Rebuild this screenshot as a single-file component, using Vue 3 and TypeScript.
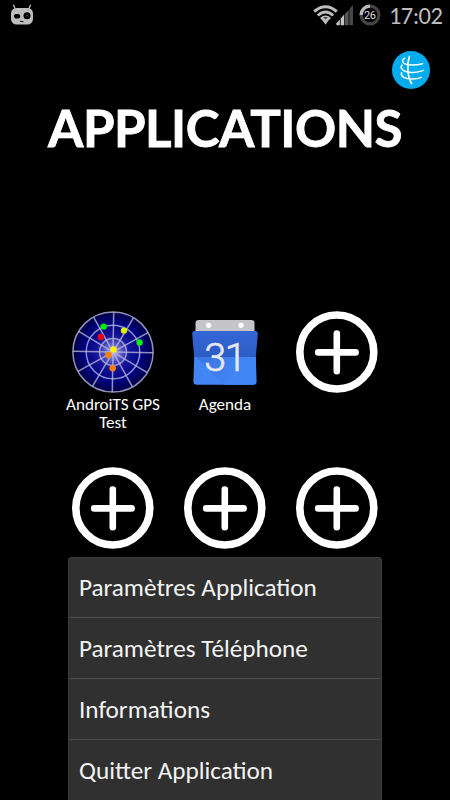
<script setup lang="ts">
interface AppSlot {
  id: number
  kind: 'gps' | 'agenda' | 'empty'
  label: string
}

const slots: AppSlot[] = [
  { id: 1, kind: 'gps', label: 'AndroiTS GPS Test' },
  { id: 2, kind: 'agenda', label: 'Agenda' },
  { id: 3, kind: 'empty', label: '' },
  { id: 4, kind: 'empty', label: '' },
  { id: 5, kind: 'empty', label: '' },
  { id: 6, kind: 'empty', label: '' },
]

const menuItems: string[] = [
  'Paramètres Application',
  'Paramètres Téléphone',
  'Informations',
  'Quitter Application',
]

// Radar spokes, one every 30 degrees
const spokes: number[] = [0, 30, 60, 90, 120, 150]
</script>

<template>
  <div class="screen">
    <header class="status">
      <svg class="robot" width="24" height="22" viewBox="0 0 24 22">
        <path d="M3.6 1.2 5.2 5M20.4 1.2 18.8 5" stroke="#bdbdbd" stroke-width="1.3" stroke-linecap="round" />
        <rect x="1" y="4" width="22" height="16.5" rx="5.5" fill="#bdbdbd" />
        <rect x="4" y="10" width="6.2" height="4.4" rx="2" fill="#000" />
        <circle cx="17" cy="11.8" r="3.5" fill="#000" />
        <circle cx="17" cy="11.8" r="0.7" fill="#777" />
        <path d="M10 17.2 13.4 17.8" stroke="#111" stroke-width="1.1" />
      </svg>
      <div class="indicators">
        <svg width="42" height="22" viewBox="0 0 42 22">
          <g fill="none" stroke="#bdbdbd" stroke-width="3">
            <path d="M1.2 7.5Q12.5 -2.1 23.8 7.5" />
            <path d="M4.8 11.5Q12.5 4.6 20.2 11.5" />
            <path d="M8 15Q12.5 11 17 15" />
          </g>
          <path d="M8.8 15.6Q12.5 13 16.2 15.6L12.5 20.8Z" fill="#bdbdbd" />
          <path d="M10.2 13.1l2.3 2.4 2.3-2.4z" fill="#444" />
          <path d="M23.4 21.2v-2l3.4-3.6v5.6z" fill="#c4c4c4" />
          <path d="M27.7 21.2v-6.8l3.5-3.8v10.6z" fill="#c4c4c4" />
          <path d="M32 21.2V9.7l3.6-3.8v15.3z" fill="#555" />
          <path d="M36.4 21.2V4.9l3.6-3.8v20.1z" fill="#484848" />
        </svg>
        <svg class="battery" width="22" height="22" viewBox="0 0 22 22">
          <circle cx="11" cy="11" r="8.9" fill="none" stroke="#444" stroke-width="3.2" />
          <path d="M2.1 11A8.9 8.9 0 0 1 11 2.1" fill="none" stroke="#bbb" stroke-width="3.2" />
          <text x="10.8" y="14.8" class="battery-text">26</text>
        </svg>
        <span class="clock">17:02</span>
      </div>
    </header>

    <div class="brand-row">
      <svg width="38" height="38" viewBox="0 0 38 38">
        <circle cx="19" cy="19" r="19" fill="#05aced" />
        <g fill="none" stroke="#fff" stroke-linecap="round">
          <path d="M17.4 5.5C14.7 13 15.2 25 19.6 32.5" stroke-width="1.7" />
          <path d="M13 7C8.8 9.2 10 13.2 17 13.8Q24 14.4 30.5 12.7" stroke-width="1.4" />
          <path d="M10 14C7.6 17 10.5 20.4 17.5 21.2Q25 22 31.5 19.4" stroke-width="1.5" />
          <path d="M9.5 21.8C8.5 25.3 12.5 27.5 18.5 28Q25 28.4 29.2 26.4" stroke-width="1.5" />
        </g>
      </svg>
    </div>

    <h1 class="title">APPLICATIONS</h1>

    <main class="grid">
      <div v-for="slot in slots" :key="slot.id" class="slot">
        <svg v-if="slot.kind === 'gps'" class="icon" viewBox="0 0 82 82">
          <defs>
            <radialGradient id="radar">
              <stop offset="0" stop-color="#b8b8ff" />
              <stop offset="0.18" stop-color="#6666cf" />
              <stop offset="0.4" stop-color="#151599" />
              <stop offset="0.72" stop-color="#000080" />
              <stop offset="1" stop-color="#000040" />
            </radialGradient>
          </defs>
          <circle cx="41" cy="41" r="40.5" fill="url(#radar)" />
          <g fill="none" stroke="#b8b8dd" stroke-opacity="0.78" stroke-width="1.5">
            <line
              v-for="angle in spokes"
              :key="angle"
              x1="1" y1="41" x2="81" y2="41"
              :transform="`rotate(${angle + 1} 41 41)`"
            />
            <circle cx="41" cy="41" r="40.1" />
            <circle cx="41" cy="41" r="26.8" />
            <circle cx="41" cy="41" r="13.4" />
          </g>
          <circle cx="31.7" cy="15.6" r="3.2" fill="#00f000" />
          <circle cx="52" cy="19.6" r="3.2" fill="#d9f000" />
          <circle cx="28.8" cy="26" r="3.2" fill="#f00018" />
          <circle cx="67.6" cy="31.5" r="3.2" fill="#00f018" />
          <circle cx="41.5" cy="38.5" r="3.2" fill="#fff000" />
          <circle cx="36.5" cy="44" r="3.2" fill="#ff8000" />
          <circle cx="40.7" cy="57.3" r="3.2" fill="#ff8000" />
        </svg>

        <svg v-else-if="slot.kind === 'agenda'" class="icon" viewBox="0 0 82 82">
          <defs>
            <linearGradient id="leaf-top" x2="0" y2="1">
              <stop offset="0" stop-color="#3367d6" />
              <stop offset="1" stop-color="#2c5cc5" />
            </linearGradient>
            <linearGradient id="fold" gradientUnits="userSpaceOnUse" x1="14" y1="46" x2="50" y2="66">
              <stop offset="0" stop-color="#3a74e0" />
              <stop offset="1" stop-color="#4285f4" />
            </linearGradient>
          </defs>
          <path d="M11.5 23V12.2Q11.5 9 14.7 9H67.3Q70.5 9 70.5 12.2V23Z" fill="#c5c4c7" />
          <circle cx="24.6" cy="14.3" r="2.6" fill="#fff" />
          <circle cx="57" cy="14.3" r="2.6" fill="#fff" />
          <path d="M10.5 20H71.2Q74 20 73.8 23L71.8 46H10.2L8.2 23Q8 20 10.5 20Z" fill="url(#leaf-top)" />
          <path d="M10.2 46H71.8L72.6 70.5Q72.6 73.8 69.3 73.8H12.7Q9.4 73.8 9.4 70.5Z" fill="#4285f4" />
          <path d="M12 46H71.8V70.5Q71.8 73.8 68.5 73.8H39.8Z" fill="url(#fold)" />
          <text x="40.8" y="60.2" class="agenda-day">31</text>
        </svg>

        <svg v-else class="icon" viewBox="0 0 82 82">
          <circle cx="40.8" cy="41" r="37" fill="none" stroke="#fff" stroke-width="7.6" />
          <path d="M40.8 22.5V60.2M22.2 41.4H59.6" stroke="#fff" stroke-width="6.6" stroke-linecap="round" />
        </svg>

        <div class="label">{{ slot.label }}</div>
      </div>
    </main>

    <nav class="menu">
      <button v-for="item in menuItems" :key="item" type="button" class="menu-item">{{ item }}</button>
    </nav>
  </div>
</template>

<style>
body {
  background: #000;
}
</style>

<style scoped>
.screen {
  position: relative;
  width: 450px;
  height: 800px;
  overflow: hidden;
  background: #000;
  color: #fff;
  font-family: Carlito, Lato, sans-serif;
}

.status {
  display: flex;
  align-items: center;
  justify-content: space-between;
  height: 32px;
  padding: 0 8px 0 10px;
  box-sizing: border-box;
}

.robot {
  margin-bottom: 3px;
}

.indicators {
  display: flex;
  align-items: center;
  height: 32px;
}

.indicators svg {
  margin-bottom: 2px;
}

.battery {
  margin-left: 4px;
}

.battery-text {
  font: 11px Roboto, sans-serif;
  letter-spacing: -0.5px;
  fill: #ddd;
  text-anchor: middle;
}

.clock {
  width: 53px;
  margin-left: 8px;
  color: #bdbdbd;
  font-size: 24.5px;
  letter-spacing: -0.6px;
  line-height: 32px;
  white-space: nowrap;
}

.brand-row {
  display: flex;
  justify-content: flex-end;
  padding: 19px 20px 0 0;
}

.brand-row svg {
  display: block;
}

.title {
  margin: 6px 0 0;
  font-family: Lato, Carlito, sans-serif;
  font-size: 51px;
  font-weight: 700;
  letter-spacing: -0.5px;
  line-height: 65px;
  text-align: center;
  white-space: nowrap;
  -webkit-text-stroke: 0.8px #fff;
}

.grid {
  display: grid;
  grid-template-columns: repeat(3, 112px);
  grid-auto-rows: 156px;
  justify-content: center;
  padding-top: 151px;
}

.slot {
  display: flex;
  flex-direction: column;
  align-items: center;
}

.icon {
  width: 82px;
  height: 82px;
  flex: none;
}

.label {
  max-width: 104px;
  margin-top: 3px;
  font-size: 17.1px;
  line-height: 18px;
  text-align: center;
}

.agenda-day {
  font: 300 39.5px Roboto, sans-serif;
  letter-spacing: -1.3px;
  fill: #e8e8ec;
  stroke: #e8e8ec;
  stroke-width: 0.7px;
  text-anchor: middle;
}

.menu {
  position: absolute;
  top: 557px;
  left: 68px;
  width: 314px;
  box-sizing: border-box;
  border: 1px solid #3c3c3c;
  border-radius: 3px 3px 0 0;
  background: #303030;
}

.menu-item {
  display: block;
  width: 100%;
  height: 61px;
  box-sizing: border-box;
  padding: 0 10px;
  border: 0;
  border-bottom: 1px solid #4c4c4c;
  background: transparent;
  color: #f3f3f3;
  font: inherit;
  font-size: 25.2px;
  text-align: left;
  white-space: nowrap;
}

.menu-item:first-child {
  height: 60px;
}
</style>
